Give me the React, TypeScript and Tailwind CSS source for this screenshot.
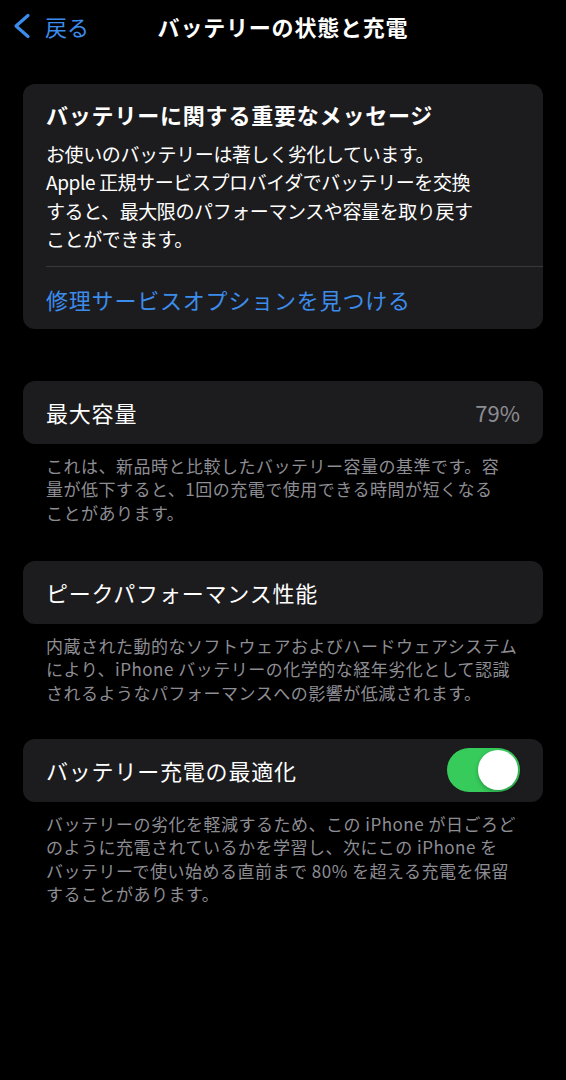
import React from 'react';

const FONT = { fontFamily: '"Noto Sans CJK JP", "Noto Sans", sans-serif' };

const Footer: React.FC<{ lines: string[]; className?: string }> = ({ lines, className }) => (
  <div className={`px-[23px] text-[17px] leading-[23.3px] tracking-[0.5px] text-[#8d8d93] ${className ?? ''}`}>
    {lines.map((l, i) => (
      <div key={i} className="whitespace-nowrap">
        {l}
      </div>
    ))}
  </div>
);

const Row: React.FC<{ title: string; children?: React.ReactNode; className?: string }> = ({ title, children, className }) => (
  <div className={`flex h-[63px] items-center justify-between rounded-[12px] bg-[#1c1c1e] pl-[23px] pr-[23px] ${className ?? ''}`}>
    <span className="text-[22px] tracking-[0.8px] text-white">{title}</span>
    {children}
  </div>
);

export default function App() {
  return (
    <div className="min-h-[1080px] w-full bg-black text-white" style={FONT}>
      {/* nav bar */}
      <div className="grid h-[51px] grid-cols-[1fr_auto_1fr] items-center">
        <div className="flex items-center gap-[13px] pl-[12px] text-[#3c8cec]">
          <svg width="20" height="26" viewBox="0 0 20 26" fill="none">
            <path d="M16 2.5 L4 13 L16 23.5" stroke="currentColor" strokeWidth="3.2" strokeLinecap="round" strokeLinejoin="round" />
          </svg>
          <span className="text-[22px] leading-none">戻る</span>
        </div>
        <div className="text-[22px] font-semibold tracking-[0.8px] leading-none">バッテリーの状態と充電</div>
        <div />
      </div>

      <div className="px-[23px] pt-[33px]">
        {/* message card */}
        <div className="rounded-[12px] bg-[#1c1c1e] pb-[15px] pt-[15px]">
          <div className="px-[23px] text-[22px] font-bold leading-[30px] tracking-[0.8px]">
            バッテリーに関する重要なメッセージ
          </div>
          <div className="mt-[11px] px-[23px] text-[19px] leading-[28.3px] tracking-[-0.4px]">
            <div className="whitespace-nowrap">お使いのバッテリーは著しく劣化しています。</div>
            <div className="whitespace-nowrap">Apple 正規サービスプロバイダでバッテリーを交換</div>
            <div className="whitespace-nowrap">すると、最大限のパフォーマンスや容量を取り戻す</div>
            <div className="whitespace-nowrap">ことができます。</div>
          </div>
          <div className="ml-[23px] mt-[13px] h-px bg-[#38383a]" />
          <div className="mt-[17px] px-[23px] text-[22px] leading-[30px] tracking-[0.8px] text-[#3c8cec]">
            修理サービスオプションを見つける
          </div>
        </div>

        <Row title="最大容量" className="mt-[52px]">
          <span className="text-[22px] text-[#8d8d93]">79%</span>
        </Row>
        <Footer
          className="mt-[10px]"
          lines={[
            'これは、新品時と比較したバッテリー容量の基準です。容',
            '量が低下すると、1回の充電で使用できる時間が短くなる',
            'ことがあります。',
          ]}
        />

        <Row title="ピークパフォーマンス性能" className="mt-[37px] h-[62px]" />
        <Footer
          className="mt-[10px]"
          lines={[
            '内蔵された動的なソフトウェアおよびハードウェアシステム',
            'により、iPhone バッテリーの化学的な経年劣化として認識',
            'されるようなパフォーマンスへの影響が低減されます。',
          ]}
        />

        <Row title="バッテリー充電の最適化" className="mt-[35px] h-[62px]">
          <div className="flex h-[44px] w-[73px] items-center justify-end rounded-full bg-[#36cb5b] p-[2px]">
            <div className="h-[40px] w-[40px] rounded-full bg-white shadow-[0_2px_4px_rgba(0,0,0,0.25)]" />
          </div>
        </Row>
        <Footer
          className="mt-[10px]"
          lines={[
            'バッテリーの劣化を軽減するため、この iPhone が日ごろど',
            'のように充電されているかを学習し、次にこの iPhone を',
            'バッテリーで使い始める直前まで 80% を超える充電を保留',
            'することがあります。',
          ]}
        />
      </div>
    </div>
  );
}
